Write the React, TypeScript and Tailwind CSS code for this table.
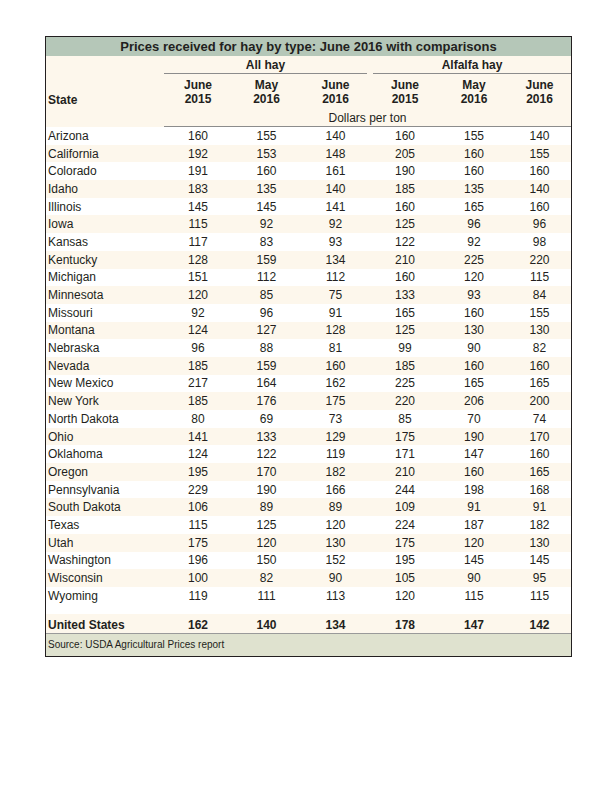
type Row = [string, number, number, number, number, number, number]

const rows: Row[] = [
  ['Arizona', 160, 155, 140, 160, 155, 140],
  ['California', 192, 153, 148, 205, 160, 155],
  ['Colorado', 191, 160, 161, 190, 160, 160],
  ['Idaho', 183, 135, 140, 185, 135, 140],
  ['Illinois', 145, 145, 141, 160, 165, 160],
  ['Iowa', 115, 92, 92, 125, 96, 96],
  ['Kansas', 117, 83, 93, 122, 92, 98],
  ['Kentucky', 128, 159, 134, 210, 225, 220],
  ['Michigan', 151, 112, 112, 160, 120, 115],
  ['Minnesota', 120, 85, 75, 133, 93, 84],
  ['Missouri', 92, 96, 91, 165, 160, 155],
  ['Montana', 124, 127, 128, 125, 130, 130],
  ['Nebraska', 96, 88, 81, 99, 90, 82],
  ['Nevada', 185, 159, 160, 185, 160, 160],
  ['New Mexico', 217, 164, 162, 225, 165, 165],
  ['New York', 185, 176, 175, 220, 206, 200],
  ['North Dakota', 80, 69, 73, 85, 70, 74],
  ['Ohio', 141, 133, 129, 175, 190, 170],
  ['Oklahoma', 124, 122, 119, 171, 147, 160],
  ['Oregon', 195, 170, 182, 210, 160, 165],
  ['Pennsylvania', 229, 190, 166, 244, 198, 168],
  ['South Dakota', 106, 89, 89, 109, 91, 91],
  ['Texas', 115, 125, 120, 224, 187, 182],
  ['Utah', 175, 120, 130, 175, 120, 130],
  ['Washington', 196, 150, 152, 195, 145, 145],
  ['Wisconsin', 100, 82, 90, 105, 90, 95],
  ['Wyoming', 119, 111, 113, 120, 115, 115],
]

const total: Row = ['United States', 162, 140, 134, 178, 147, 142]

// column widths, state column is w-[118px]
const cols = ['w-[68px]', 'w-[69px]', 'w-[69px]', 'w-[70px]', 'w-[68px]', 'w-[63px]']
const heads = [
  ['June', '2015'],
  ['May', '2016'],
  ['June', '2016'],
  ['June', '2015'],
  ['May', '2016'],
  ['June', '2016'],
]

function DataRow({ row, className }: { row: Row; className: string }) {
  const [state, ...vals] = row
  return (
    <div className={`flex items-center ${className}`}>
      <div className="w-[118px] pl-[2px]">{state}</div>
      {vals.map((v, i) => (
        <div key={i} className={`${cols[i]} text-center`}>
          {v}
        </div>
      ))}
    </div>
  )
}

export default function App() {
  return (
    <div className="min-h-[800px] w-[600px] bg-white pl-[45px] pt-[36px] font-['Liberation_Sans',Arial,sans-serif] text-[#231f20]">
      <div className="w-[527px] border border-[#231f20]">
        <div className="flex h-[19px] items-center justify-center bg-[#b5c7b8] text-[13px] font-bold leading-none">
          Prices received for hay by type: June 2016 with comparisons
        </div>

        <div className="flex bg-[#fdf7ec]">
          <div className="flex w-[118px] items-end pb-[20px] pl-[2px] text-[12px] font-bold leading-[14px]">
            State
          </div>
          <div className="flex flex-col">
            <div className="flex text-[12px] font-bold">
              <div className="w-[206px] pr-[3px]">
                <div className="flex h-[18px] items-center justify-center border-b border-[#8c8c8c]">All hay</div>
              </div>
              <div className="w-[201px] pl-[3px]">
                <div className="flex h-[18px] items-center justify-center border-b border-[#8c8c8c]">Alfalfa hay</div>
              </div>
            </div>
            <div className="flex pt-[4px] text-[12px] font-bold leading-[14px]">
              {heads.map(([a, b], i) => (
                <div key={i} className={`${cols[i]} text-center`}>
                  {a}
                  <br />
                  {b}
                </div>
              ))}
            </div>
            <div className="border-b border-[#8c8c8c] pt-[4px] text-center text-[12px] leading-[16px]">
              Dollars per ton
            </div>
          </div>
        </div>

        <div className="text-[12px] leading-none">
          {rows.map((r, i) => (
            <DataRow key={r[0]} row={r} className={`h-[17.7px] ${i % 2 ? 'bg-[#fdf7ec]' : 'bg-white'}`} />
          ))}
          <div className="h-[9px] bg-white" />
          <DataRow
            row={total}
            className="h-[20px] border-b border-[#9a9a9a] bg-[#fdf7ec] pt-[3px] font-bold"
          />
        </div>

        <div className="flex h-[22px] items-center bg-[#dfe2cf] pl-[2px] text-[10px]">
          Source: USDA Agricultural Prices report
        </div>
      </div>
    </div>
  )
}
